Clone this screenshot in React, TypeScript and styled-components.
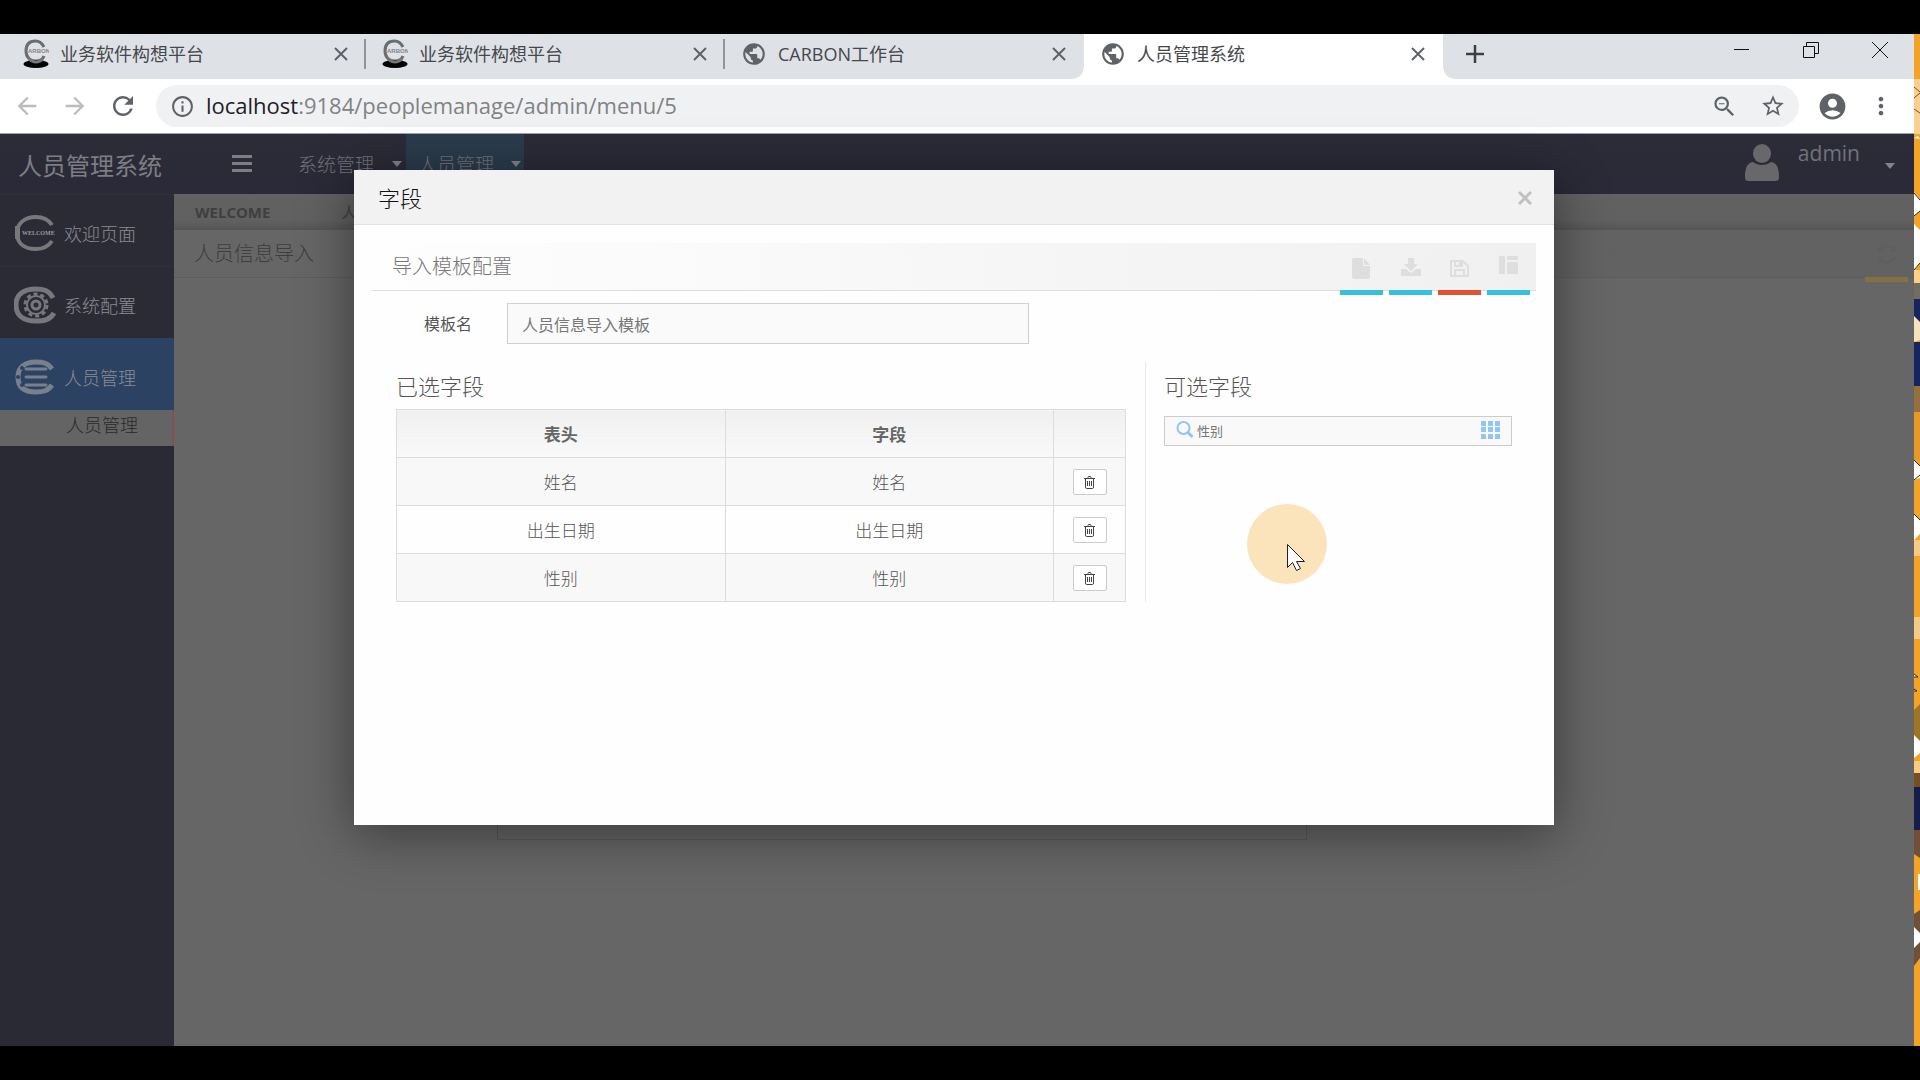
import React from "react";
import styled, { createGlobalStyle, css } from "styled-components";
import {
  MdArrowBack,
  MdArrowForward,
  MdRefresh,
  MdInfoOutline,
  MdZoomOut,
  MdStarBorder,
  MdAccountCircle,
  MdMoreVert,
  MdPublic,
} from "react-icons/md";

const sans = `"Open Sans", "Noto Sans CJK SC", sans-serif`;
const cjk = `"Noto Sans CJK SC", "Noto Sans", sans-serif`;

const GlobalStyle = createGlobalStyle`
  * { box-sizing: border-box; }
  body { margin: 0; background: #000; font-family: ${cjk}; }
  button { font: inherit; padding: 0; border: 0; background: none; color: inherit; cursor: pointer; }
  input { font: inherit; color: inherit; min-width: 0; }
  a { color: inherit; text-decoration: none; }
  h1, h2, h3 { margin: 0; font-weight: 300; }
  svg { display: block; }
`;

/* ---------- Desktop and browser chrome ---------- */

const Screen = styled.div`
  min-height: 100vh;
  padding: 34px 0;
  display: flex;
  background: #000;
`;

const Browser = styled.div`
  flex: 1;
  min-width: 0;
  display: flex;
  flex-direction: column;
  background: #fff;
`;

const Desktop = styled.aside`
  width: 6px;
  background: #f1a128;
  overflow: hidden;
  svg { width: 6px; height: 100%; }
`;

const TabStrip = styled.nav`
  height: 45px;
  display: flex;
  padding-left: 7px;
  background: #dee1e6;
`;

const BrowserTab = styled.div<{ $active?: boolean; $divided?: boolean }>`
  position: relative;
  flex: 0 1 359px;
  height: 45px;
  display: flex;
  align-items: center;
  gap: 11px;
  padding: 0 18px 6px 16px;
  font-family: ${sans};
  font-size: 18px;
  line-height: 26px;
  color: #45494d;
  ${(p) => p.$divided && css`
    &::after {
      content: "";
      position: absolute;
      right: 0;
      top: 5px;
      width: 2px;
      height: 30px;
      background: #919499;
    }
  `}
  ${(p) => p.$active && css`
    background: #fff;
    &::before, &::after {
      content: "";
      position: absolute;
      bottom: 0;
      width: 11px;
      height: 11px;
    }
    &::before { left: -11px; background: radial-gradient(circle at 0 0, #dee1e6 10px, #fff 11px); }
    &::after { right: -11px; background: radial-gradient(circle at 100% 0, #dee1e6 10px, #fff 11px); }
  `}
`;

const TabName = styled.a`
  flex: 1;
  white-space: nowrap;
`;

const IconButton = styled.button`
  display: flex;
  align-items: center;
  justify-content: center;
  color: #5f6368;
`;

const NewTab = styled(IconButton)`
  width: 64px;
  height: 39px;
  color: #3c4043;
`;

const WindowControls = styled.div`
  margin-left: auto;
  height: 32px;
  display: flex;
  button { width: 69px; color: #111; }
`;

const Toolbar = styled.div`
  height: 55px;
  display: flex;
  align-items: center;
  padding: 0 19px 0 12px;
  border-bottom: 1px solid #9da3a6;
  background: #fff;
`;

const NavButtons = styled.div`
  display: flex;
  gap: 18px;
  margin-right: 18px;
  button { width: 30px; }
  button:disabled { color: #babcbe; }
`;

const AddressBar = styled.form`
  flex: 1;
  height: 42px;
  display: flex;
  align-items: center;
  gap: 11px;
  padding: 0 13px 0 14px;
  border-radius: 21px;
  background: #f0f1f3;
`;

const Address = styled.a`
  flex: 1;
  padding-bottom: 2px;
  font-family: ${sans};
  font-size: 22px;
  line-height: 28px;
  color: #7f8386;
  b { font-weight: 400; color: #202124; }
`;

const AddressActions = styled.div`
  display: flex;
  gap: 22px;
`;

const ProfileActions = styled.div`
  display: flex;
  gap: 19px;
  margin-left: 18px;
`;

/* ---------- Application behind the dialog ---------- */

const Page = styled.div`
  position: relative;
  flex: 1;
  display: flex;
  flex-direction: column;
  background: #666;
`;

const AppHeader = styled.header`
  height: 60px;
  display: flex;
  background: linear-gradient(#2b2c37, #2a2a38);
  color: #72727a;
`;

const Brand = styled.h1`
  width: 232px;
  padding: 0 0 0 18px;
  font-size: 24px;
  font-weight: 400;
  line-height: 62px;
  color: #7d7d83;
`;

const MenuToggle = styled.button`
  width: 20px;
  height: 58px;
  margin-right: 32px;
  color: #7d7d83;
`;

const MainMenu = styled.nav`
  display: flex;
  font-size: 19px;
  line-height: 60px;
`;

const MenuItem = styled.a<{ $active?: boolean }>`
  width: ${(p) => (p.$active ? "118px" : "122px")};
  display: flex;
  align-items: center;
  justify-content: space-between;
  padding: 0 ${(p) => (p.$active ? "3px 0 12px" : "4px 0 14px")};
  font-weight: 300;
  background: ${(p) => (p.$active ? "#2b3c4c" : "transparent")};
`;

const Caret = styled.span`
  border: 5px solid transparent;
  border-top: 6px solid #83838a;
  border-bottom: 0;
`;

const Account = styled.button`
  margin-left: auto;
  padding: 0 19px 4px 0;
  display: flex;
  gap: 19px;
  align-items: center;
  font-family: ${sans};
  font-size: 21px;
  line-height: 38px;
  span:nth-of-type(1) { align-self: flex-start; }
  span:nth-of-type(2) { margin: 8px 0 0 6px; }
`;

const AppBody = styled.div`
  flex: 1;
  display: flex;
`;

const Sidebar = styled.nav`
  width: 174px;
  background: #2a2a34;
`;

const SideLink = styled.a<{ $active?: boolean }>`
  height: 72px;
  display: flex;
  align-items: center;
  gap: 7px;
  padding: 5px 0 0 14px;
  border-top: 1px solid ${(p) => (p.$active ? "#2c4263" : "#30303a")};
  font-size: 18px;
  line-height: 28px;
  font-weight: 300;
  color: #8b8b92;
  background: ${(p) => (p.$active ? "#2c4263" : "#2a2b35")};
`;

const SideSubLink = styled.a`
  display: block;
  height: 36px;
  padding-left: 66px;
  border-right: 2px solid #80514d;
  font-size: 18px;
  line-height: 28px;
  font-weight: 300;
  color: #292929;
  background: #656464;
`;

const Content = styled.main`
  flex: 1;
  min-width: 0;
`;

const PageTabs = styled.div`
  height: 36px;
  display: flex;
  gap: 71px;
  padding-left: 21px;
  font-family: ${sans};
  font-size: 15px;
  line-height: 36px;
  color: #3f3f3f;
  background: linear-gradient(#636262, #606060 75%, #555);
`;

const PanelBar = styled.div`
  height: 48px;
  display: flex;
  justify-content: space-between;
  padding: 0 6px 0 20px;
  border-bottom: 1px solid #5d5d5d;
  background: linear-gradient(90deg, #666, #626262);
`;

const PanelBarTitle = styled.h2`
  font-size: 20px;
  line-height: 46px;
  color: #3d3d3d;
`;

const ToolButton = styled.button<{ $line: string }>`
  width: 43px;
  height: 52px;
  display: flex;
  align-items: center;
  justify-content: center;
  border-bottom: 5px solid ${(p) => p.$line};
  color: #dedede;
`;

const DimToolButton = styled(ToolButton)`
  color: #5f5f5f;
`;

const HiddenPanel = styled.section`
  width: 810px;
  height: 562px;
  margin: 0 auto 0 323px;
  border: 1px solid #595959;
  border-top: 0;
`;

/* ---------- Dialog ---------- */

const Overlay = styled.div`
  position: absolute;
  inset: 0;
  display: flex;
  align-items: flex-start;
  justify-content: center;
  padding: 36px 6px 0 0;
`;

const Dialog = styled.section`
  position: relative;
  width: 1200px;
  background: #fefefe;
  box-shadow: 0 8px 50px rgba(0, 0, 0, 0.45);
`;

const DialogHeader = styled.header`
  height: 55px;
  display: flex;
  align-items: center;
  justify-content: space-between;
  padding: 0 22px 0 24px;
  border-bottom: 1px solid #e2e2e2;
  background: #f2f2f2;
`;

const DialogTitle = styled.h2`
  font-size: 22px;
  line-height: 32px;
  color: #111;
`;

const DialogClose = styled.button`
  width: 14px;
  height: 16px;
  color: #c0c0c0;
`;

const DialogBody = styled.div`
  min-height: 600px;
  padding: 18px;
`;

const ConfigBar = styled.div`
  height: 48px;
  display: flex;
  justify-content: space-between;
  padding: 0 6px 0 20px;
  border-bottom: 1px solid #dedede;
  background: linear-gradient(90deg, #fefefe, #f9f9f9 35%, #f0f0f0);
`;

const ConfigTitle = styled.h3`
  font-size: 20px;
  line-height: 46px;
  color: #777;
`;

const Tools = styled.div`
  display: flex;
  gap: 6px;
`;

const NameRow = styled.div`
  display: grid;
  grid-template-columns: 135px minmax(0, 522px);
  align-items: center;
  margin: 12px 0 18px;
  font-size: 16px;
  line-height: 24px;
  color: #555;
  label { padding: 0 35px 2px 0; text-align: right; }
  input {
    height: 41px;
    padding: 0 14px;
    border: 1px solid #d0d0d0;
    border-radius: 0;
    background: #fafafa;
    color: #777;
  }
`;

const Columns = styled.div`
  display: grid;
  grid-template-columns: minmax(0, 1fr) 390px;
`;

const Selected = styled.section`
  height: 240px;
  padding: 0 19px 0 24px;
  border-right: 1px solid #e8e8e8;
`;

const Available = styled.section`
  padding: 0 24px 0 18px;
`;

const SectionTitle = styled.h3`
  height: 47px;
  font-size: 22px;
  line-height: 46px;
  color: #555;
`;

const FieldTable = styled.table`
  width: 100%;
  table-layout: fixed;
  border-collapse: collapse;
  font-size: 17px;
  line-height: 24px;
  color: #555;
  text-align: center;
  th, td { height: 48px; padding: 0; border: 1px solid #dcdcdc; }
  th { color: #666; background: linear-gradient(#f0f0f0, #f9f9f9); }
  th:last-child { width: 72px; }
  td { font-weight: 300; background: #fefefe; }
  tbody tr:nth-child(odd) td { background: #f8f8f8; }
`;

const DeleteButton = styled.button`
  width: 34px;
  height: 26px;
  display: inline-flex;
  align-items: center;
  justify-content: center;
  vertical-align: middle;
  border: 1px solid #ccc;
  border-radius: 2px;
  background: #fff;
  color: #444;
`;

const SearchBox = styled.div`
  height: 30px;
  margin-top: 7px;
  display: flex;
  align-items: center;
  gap: 3px;
  padding: 0 11px 2px;
  border: 1px solid #ccc;
  background: #f9f9f9;
  color: #92c5f5;
  input {
    flex: 1;
    height: 26px;
    padding: 0;
    border: 0;
    outline: 0;
    background: transparent;
    color: #777;
    font-size: 13px;
    line-height: 20px;
  }
`;

const GridButton = styled(IconButton)`
  color: #92c5f5;
`;

const Pointer = styled.div`
  position: absolute;
  left: 893px;
  top: 334px;
  width: 80px;
  height: 80px;
  padding: 40px 0 0 40px;
  border-radius: 50%;
  background: #fbe3bb;
  pointer-events: none;
`;

/* ---------- Drawings ---------- */

const CarbonMark = () => (
  <svg width="26" height="30" viewBox="0 0 26 30" fill="none">
    <path d="M21 8C19 4 16 2 12.500 2C6 2 3 6 3 12C3 18 7 22 12.500 22C17 22 20 20 21 17" stroke="#6d6d6f" strokeWidth="3" />
    <ellipse cx="13" cy="25" rx="12.500" ry="4" fill="#000" />
    <path d="M6 20c4 4 10 4 14 0" stroke="#77777a" strokeWidth="3" />
    <text x="5" y="14" fontSize="6" fontWeight="700" fontFamily="Liberation Sans, sans-serif" fill="#858588">ARBON</text>
  </svg>
);

const TabCrossIcon = () => (
  <svg width="14" height="14" viewBox="0 0 14 14" fill="none" stroke="currentColor" strokeWidth="2">
    <path d="M1 1l12 12M13 1L1 13" />
  </svg>
);

const PlusIcon = () => (
  <svg width="18" height="18" viewBox="0 0 18 18" fill="currentColor">
    <path d="M8 0h2v8h8v2h-8v8H8v-8H0V8h8z" stroke="currentColor" strokeWidth="0.500" />
  </svg>
);

const WelcomeIcon = () => (
  <svg width="43" height="36" viewBox="0 0 43 36" fill="none">
    <path d="M38 10C34 4 29 2 22 2C10 2 3 9 3 18C3 28 10 34 22 34C29 34 34 32 38 26" stroke="#77777c" strokeWidth="4" />
    <path d="M7 11h35v13H7z" fill="#2a2b35" />
    <path d="M1 11h5v13H1z" fill="#77777c" />
    <text x="8" y="20" fontSize="6" fontWeight="700" fontFamily="Liberation Serif, serif" fill="#9a9aa0">WELCOME</text>
  </svg>
);

const ConfigIcon = () => (
  <svg width="43" height="38" viewBox="0 0 43 38" fill="none" stroke="#77777c">
    <path d="M39 12C35 4 29 3 22 3C9 3 2 9 2 19C2 29 9 35 22 35C30 35 36 34 40 27" strokeWidth="5" />
    <circle cx="22" cy="19" r="9" strokeWidth="2" />
    <circle cx="22" cy="19" r="11" strokeWidth="3" strokeDasharray="4 3" />
    <circle cx="22" cy="19" r="4" strokeWidth="3" />
  </svg>
);

const PeopleIcon = () => (
  <svg width="43" height="36" viewBox="0 0 43 36" fill="none" stroke="#77808c">
    <path d="M38 10C34 4 29 3 22 3C10 3 4 9 4 18C4 28 10 33 22 33C29 33 34 32 38 26" strokeWidth="5" />
    <path d="M12 10h20M12 18h20M12 26h20" strokeWidth="3" strokeLinecap="round" />
    <g fill="#2c4263" stroke="none">
      <circle cx="8" cy="9" r="2" />
      <circle cx="4" cy="18" r="2" />
      <circle cx="8" cy="26" r="2" />
    </g>
  </svg>
);

const BarsIcon = () => (
  <svg width="20" height="17" viewBox="0 0 20 17" fill="currentColor">
    <path d="M0 0h20v3H0zM0 7h20v3H0zM0 14h20v3H0z" />
  </svg>
);

const UserIcon = () => (
  <svg width="34" height="37" viewBox="0 0 34 37" fill="#68686b">
    <ellipse cx="17" cy="9.500" rx="9" ry="9.500" />
    <path d="M8 18C2 19 0 24 0 33c0 3 1 4 4 4h26c3 0 4-1 4-4c0-9-2-14-8-15c-5 4-13 4-18 0z" />
  </svg>
);

const FileIcon = () => (
  <svg width="22" height="24" viewBox="0 0 22 24" fill="currentColor">
    <path d="M3 3h9v8h7v11q0 2-2 2H3q-2 0-2-2V5q0-2 2-2zM13 3l6 7h-6z" />
  </svg>
);

const DownloadIcon = () => (
  <svg width="20" height="20" viewBox="0 0 20 20" fill="currentColor">
    <path d="M7 1h6v6h4l-7 7-7-7h4zM0 12h5l5 4 5-4h5v7H0z" />
  </svg>
);

const SaveIcon = () => (
  <svg width="20" height="20" viewBox="0 0 20 20" fill="none" stroke="currentColor" strokeWidth="2">
    <path d="M1 4h12l5 5v10H1zM5 19v-6h9v6M5 4v5h7V4" />
    <path d="M10 4v4" />
  </svg>
);

const LayoutIcon = () => (
  <svg width="19" height="22" viewBox="0 0 19 22" fill="currentColor">
    <rect width="6" height="18" rx="1" />
    <rect x="8" width="11" height="4" rx="1" />
    <rect x="8" y="6" width="11" height="12" rx="1" />
  </svg>
);

const TrashIcon = () => (
  <svg width="12" height="13" viewBox="0 0 12 13" fill="none" stroke="currentColor">
    <path d="M0 2.500h11M3.500 2.500l1-2h2l1 2M1.500 3v8q0 1.500 1 1.500h6q1 0 1-1.500V3M3.500 5v5M5.500 5v5M7.500 5v5" />
  </svg>
);

const SearchIcon = () => (
  <svg width="18" height="20" viewBox="0 0 18 20" fill="none" stroke="currentColor">
    <circle cx="7.500" cy="8" r="6" strokeWidth="2" />
    <path d="M12 12.500l4.500 4.500" strokeWidth="3" />
  </svg>
);

const GridIcon = () => (
  <svg width="19" height="18" viewBox="0 0 19 18" fill="currentColor">
    {[0, 7, 14].map((x) => [0, 6, 13].map((y) => <rect key={`${x}-${y}`} x={x} y={y} width="5" height="5" />))}
  </svg>
);

const RefreshIcon = () => (
  <svg width="22" height="20" viewBox="0 0 22 20" fill="none" stroke="currentColor" strokeWidth="3">
    <path d="M2 8C5 1 14 0 18 5M20 12C17 19 8 20 4 15" />
    <path d="M20 1v7h-7zM2 19v-7h7z" fill="currentColor" stroke="none" />
  </svg>
);

const CrossIcon = () => (
  <svg width="14" height="16" viewBox="0 0 14 16" fill="none" stroke="currentColor" strokeWidth="3">
    <path d="M1 3l12 12M13 3L1 15" />
  </svg>
);

const ArrowCursor = () => (
  <svg width="19" height="28" viewBox="0 0 19 28" fill="#fff" stroke="#222">
    <path d="M.5.5v23l5-5 4 8 4-2-4-7h8z" />
  </svg>
);

const Wallpaper = () => (
  <svg viewBox="0 0 6 1012" preserveAspectRatio="none">
    <rect width="6" height="1012" fill="#f2a32a" />
    <path d="M0 45h6v55H0z" fill="#f6d191" />
    <path d="M0 53l6 5M0 64l6-5M0 75l6 4" stroke="#715323" />
    <path d="M0 104l4-2 2 3M0 158l6 7v12l-6 5zM0 190l6 6v33l-6 8z" fill="#fff" />
    <path d="M0 159l6 7M0 182l6-5M0 236l6-7" stroke="#34240c" />
    <path d="M0 236h6v13H0z" fill="#f8d08c" />
    <path d="M0 249h6v16H0z" fill="#766b61" />
    <path d="M0 265h6v23H0zM0 308h6v44H0z" fill="#18245f" />
    <path d="M0 282l6 6v18l-6 2z" fill="#f7e2be" />
    <path d="M0 352h6v26H0z" fill="#94703e" />
    <path d="M0 378h6v48H0z" fill="#e59a28" />
    <path d="M0 426l6 6v12l-6 2zM0 480l6 6v14l-6 6z" fill="#fff" />
    <path d="M0 426l6 6M0 446l6-5M0 480l6 6" stroke="#34240c" />
    <path d="M0 506h6v16H0zM0 583h6v22H0z" fill="#f6cb86" />
    <path d="M0 640l4 3H0M0 655l3 2H0" fill="#fff" stroke="#34240c" />
    <path d="M0 676l6-6v40l-6-9z" fill="#9c7527" />
    <path d="M0 701l6 6v12l-6 5z" fill="#fff" />
    <path d="M0 727h6v12H0z" fill="#f6cb86" />
    <path d="M0 739h6v14H0z" fill="#725020" />
    <path d="M0 753h6v43H0z" fill="#151d48" />
    <path d="M0 796h6v28l-6-4zM0 880l6-4v48l-6 8z" fill="#715039" />
    <path d="M0 893l6 6v9l-6 6zM4 840h2v16H4z" fill="#fff" />
  </svg>
);

/* ---------- Content ---------- */

const tabs = [
  { name: "业务软件构想平台", carbon: true, divided: true },
  { name: "业务软件构想平台", carbon: true, divided: true },
  { name: "CARBON工作台" },
  { name: "人员管理系统", active: true },
];

const tools = [
  { label: "新建", line: "#35c0de", icon: <FileIcon /> },
  { label: "下载", line: "#35c0de", icon: <DownloadIcon /> },
  { label: "保存", line: "#e05031", icon: <SaveIcon /> },
  { label: "布局", line: "#35c0de", icon: <LayoutIcon /> },
];

const fields = ["姓名", "出生日期", "性别"];

const BrowserChrome = () => (
  <>
    <TabStrip>
      {tabs.map((tab, i) => (
        <BrowserTab key={i} $active={tab.active} $divided={tab.divided}>
          {tab.carbon ? <CarbonMark /> : <MdPublic size={26} color="#5f6368" />}
          <TabName href="#">{tab.name}</TabName>
          <IconButton aria-label="关闭标签页"><TabCrossIcon /></IconButton>
        </BrowserTab>
      ))}
      <NewTab aria-label="新标签页"><PlusIcon /></NewTab>
      <WindowControls>
        <IconButton aria-label="最小化">
          <svg width="15" height="2" viewBox="0 0 15 2"><path d="M0 0h15v1H0z" fill="currentColor" /></svg>
        </IconButton>
        <IconButton aria-label="还原">
          <svg width="16" height="16" viewBox="0 0 16 16" fill="none" stroke="currentColor"><path d="M.5 4.500h11v11H.5zM3.500 4V.5h12v11H12" /></svg>
        </IconButton>
        <IconButton aria-label="关闭">
          <svg width="16" height="16" viewBox="0 0 16 16" fill="none" stroke="currentColor"><path d="M0 0l16 16M16 0L0 16" /></svg>
        </IconButton>
      </WindowControls>
    </TabStrip>
    <Toolbar>
      <NavButtons>
        <IconButton disabled aria-label="后退"><MdArrowBack size={28} /></IconButton>
        <IconButton disabled aria-label="前进"><MdArrowForward size={28} /></IconButton>
        <IconButton aria-label="刷新"><MdRefresh size={30} /></IconButton>
      </NavButtons>
      <AddressBar>
        <MdInfoOutline size={25} color="#5f6368" />
        <Address href="#"><b>localhost</b>:9184/peoplemanage/admin/menu/5</Address>
        <AddressActions>
          <IconButton type="button" aria-label="缩小"><MdZoomOut size={27} /></IconButton>
          <IconButton type="button" aria-label="收藏"><MdStarBorder size={26} /></IconButton>
        </AddressActions>
      </AddressBar>
      <ProfileActions>
        <IconButton aria-label="用户"><MdAccountCircle size={31} /></IconButton>
        <IconButton aria-label="更多"><MdMoreVert size={28} /></IconButton>
      </ProfileActions>
    </Toolbar>
  </>
);

const FieldDialog = () => (
  <Dialog role="dialog" aria-labelledby="dialog-title">
    <DialogHeader>
      <DialogTitle id="dialog-title">字段</DialogTitle>
      <DialogClose aria-label="关闭"><CrossIcon /></DialogClose>
    </DialogHeader>
    <DialogBody>
      <ConfigBar>
        <ConfigTitle>导入模板配置</ConfigTitle>
        <Tools>
          {tools.map((t) => (
            <ToolButton key={t.label} aria-label={t.label} $line={t.line}>{t.icon}</ToolButton>
          ))}
        </Tools>
      </ConfigBar>
      <NameRow>
        <label htmlFor="template-name">模板名</label>
        <input id="template-name" defaultValue="人员信息导入模板" />
      </NameRow>
      <Columns>
        <Selected>
          <SectionTitle>已选字段</SectionTitle>
          <FieldTable>
            <thead>
              <tr><th>表头</th><th>字段</th><th aria-label="操作" /></tr>
            </thead>
            <tbody>
              {fields.map((f) => (
                <tr key={f}>
                  <td>{f}</td>
                  <td>{f}</td>
                  <td><DeleteButton aria-label="删除"><TrashIcon /></DeleteButton></td>
                </tr>
              ))}
            </tbody>
          </FieldTable>
        </Selected>
        <Available>
          <SectionTitle>可选字段</SectionTitle>
          <SearchBox>
            <SearchIcon />
            <input aria-label="搜索字段" defaultValue="性别" />
            <GridButton aria-label="全部字段"><GridIcon /></GridButton>
          </SearchBox>
        </Available>
      </Columns>
    </DialogBody>
    <Pointer><ArrowCursor /></Pointer>
  </Dialog>
);

export default function App() {
  return (
    <Screen>
      <GlobalStyle />
      <Browser>
        <BrowserChrome />
        <Page>
          <AppHeader>
            <Brand>人员管理系统</Brand>
            <MenuToggle aria-label="菜单"><BarsIcon /></MenuToggle>
            <MainMenu>
              <MenuItem href="#">系统管理<Caret /></MenuItem>
              <MenuItem href="#" $active>人员管理<Caret /></MenuItem>
            </MainMenu>
            <Account>
              <UserIcon />
              <span>admin</span>
              <Caret />
            </Account>
          </AppHeader>
          <AppBody>
            <Sidebar>
              <SideLink href="#"><WelcomeIcon />欢迎页面</SideLink>
              <SideLink href="#"><ConfigIcon />系统配置</SideLink>
              <SideLink href="#" $active><PeopleIcon />人员管理</SideLink>
              <SideSubLink href="#">人员管理</SideSubLink>
            </Sidebar>
            <Content>
              <PageTabs><b>WELCOME</b><span>人员</span></PageTabs>
              <PanelBar>
                <PanelBarTitle>人员信息导入</PanelBarTitle>
                <DimToolButton aria-label="刷新" $line="#85703f"><RefreshIcon /></DimToolButton>
              </PanelBar>
              <HiddenPanel />
            </Content>
          </AppBody>
          <Overlay><FieldDialog /></Overlay>
        </Page>
      </Browser>
      <Desktop><Wallpaper /></Desktop>
    </Screen>
  );
}
